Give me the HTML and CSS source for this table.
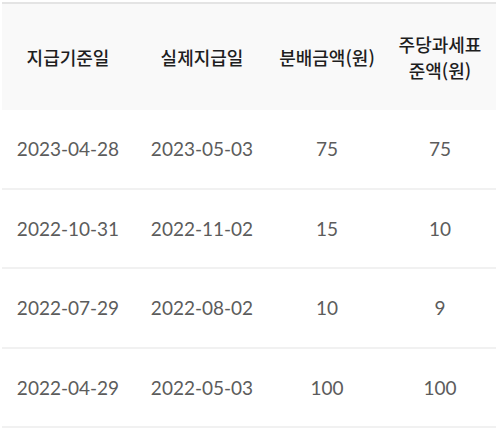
FILE: index.html
```html
<!DOCTYPE html>
<html lang="ko">
<head>
<meta charset="utf-8">
<link rel="stylesheet" href="styles.css">
</head>
<body>
<div class="wrap">
<table class="dist">
  <colgroup>
    <col class="c1"><col class="c2"><col class="c3"><col class="c4">
  </colgroup>
  <thead>
    <tr>
      <th>지급기준일</th>
      <th>실제지급일</th>
      <th>분배금액(원)</th>
      <th>주당과세표<br>준액(원)</th>
    </tr>
  </thead>
  <tbody>
    <tr><td>2023-04-28</td><td>2023-05-03</td><td>75</td><td>75</td></tr>
    <tr><td>2022-10-31</td><td>2022-11-02</td><td>15</td><td>10</td></tr>
    <tr><td>2022-07-29</td><td>2022-08-02</td><td>10</td><td>9</td></tr>
    <tr><td>2022-04-29</td><td>2022-05-03</td><td>100</td><td>100</td></tr>
  </tbody>
</table>
</div>
</body>
</html>
```
FILE: styles.css
```css
html, body {
  margin: 0;
  padding: 0;
  background: #ffffff;
}
.wrap {
  padding: 2px 0 0 2px;
}
.dist {
  border-collapse: collapse;
  table-layout: fixed;
  width: 494px;
  border-top: 2px solid #e4e4e4;
}
.c1 { width: 132px; }
.c2 { width: 136px; }
.c3 { width: 114px; }
.c4 { width: 112px; }
.dist th {
  height: 106px;
  padding: 0;
  background: #f9f9f9;
  font-family: "Noto Sans CJK KR", "Noto Sans", sans-serif;
  font-weight: 500;
  font-size: 18px;
  line-height: 26px;
  color: #1e1e1e;
  text-align: center;
  vertical-align: middle;
}
.dist td {
  height: 77.5px;
  padding: 0;
  border-bottom: 2px solid #f1f1f1;
  font-family: Lato, "Liberation Sans", sans-serif;
  font-size: 19px;
  color: #5c5c5c;
  text-align: center;
  vertical-align: middle;
}
```
